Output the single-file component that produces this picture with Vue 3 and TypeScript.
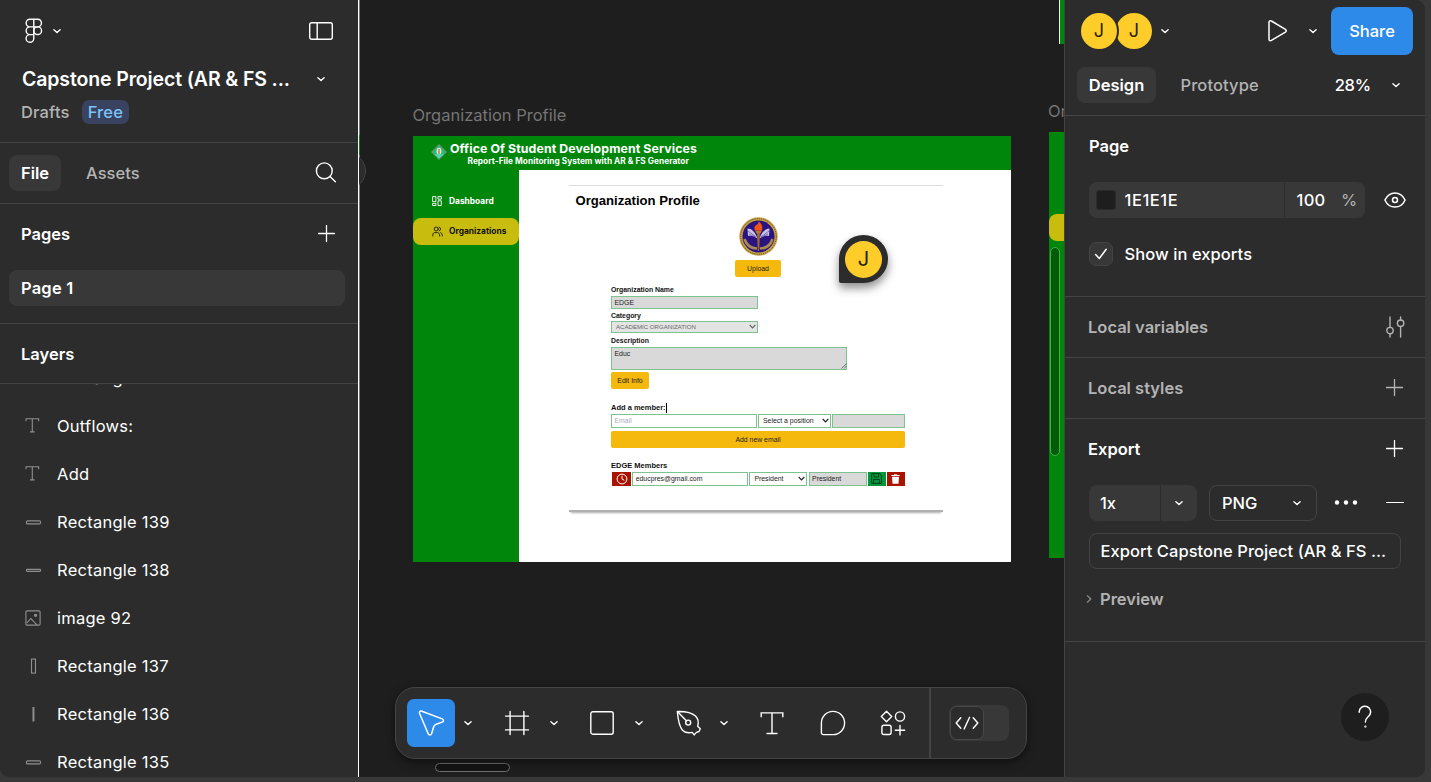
<script setup lang="ts">
import { h } from 'vue'

type LayerKind = 'text' | 'bar' | 'thinbar' | 'image' | 'tall' | 'line'
interface Layer { name: string; kind: LayerKind }

const layers: Layer[] = [
  { name: 'Rectangle 140', kind: 'bar' },
  { name: 'Outflows:', kind: 'text' },
  { name: 'Add', kind: 'text' },
  { name: 'Rectangle 139', kind: 'bar' },
  { name: 'Rectangle 138', kind: 'thinbar' },
  { name: 'image 92', kind: 'image' },
  { name: 'Rectangle 137', kind: 'tall' },
  { name: 'Rectangle 136', kind: 'line' },
  { name: 'Rectangle 135', kind: 'bar' },
]

const Chevron = () =>
  h('svg', { width: 10, height: 6, viewBox: '0 0 10 6', fill: 'none', stroke: 'currentColor', 'stroke-width': 1.4, 'stroke-linecap': 'round', 'stroke-linejoin': 'round' }, [
    h('path', { d: 'M1.9 1.7 5 4.6 8.1 1.7' }),
  ])
const Plus = () =>
  h('svg', { width: 18, height: 18, viewBox: '0 0 18 18', fill: 'none', stroke: 'currentColor', 'stroke-width': 1.3, 'stroke-linecap': 'round' }, [
    h('path', { d: 'M8.5.5v16M.5 8.5h16' }),
  ])
const SelectArrow = () =>
  h('svg', { width: 7, height: 5, viewBox: '0 0 7 5', fill: 'none', stroke: 'currentColor', 'stroke-width': 1.2 }, [
    h('path', { d: 'M.7 1 3.5 3.8 6.3 1' }),
  ])
</script>

<template>
  <div class="app">
    <aside class="left">
      <header class="file-head">
        <div class="bar">
          <div class="logo">
            <svg width="18" height="26" viewBox="0 0 18 26" fill="none" stroke="#fff" stroke-width="1.4">
              <path d="M8.8 1.2H5a3.85 3.85 0 0 0 0 7.7h3.8zM8.8 1.2h3.8a3.85 3.85 0 0 1 0 7.7H8.8zM8.8 8.9H5a3.85 3.85 0 0 0 0 7.7h3.8zM8.8 16.6H5a3.85 3.85 0 1 0 3.8 3.9z" />
              <circle cx="12.7" cy="12.7" r="3.85" />
            </svg>
            <Chevron />
          </div>
          <svg width="24" height="18" viewBox="0 0 24 18" fill="none" stroke="#fff" stroke-width="1.4">
            <rect x=".7" y=".7" width="22.6" height="16.6" rx="2" /><path d="M8.2 1v16" />
          </svg>
        </div>
        <div class="title-row"><span class="title">Capstone Project (AR &amp; FS ...</span><Chevron /></div>
        <div class="drafts"><span>Drafts</span><span class="badge">Free</span></div>
      </header>
      <nav class="tabs">
        <span class="tab on">File</span><span class="tab">Assets</span>
        <svg class="search" width="22" height="22" viewBox="0 0 22 22" fill="none" stroke="#fff" stroke-width="1.4" stroke-linecap="round">
          <circle cx="9.3" cy="8.8" r="7.9" /><path d="m15 14.500 5.400 5.200" />
        </svg>
      </nav>
      <section class="pages">
        <div class="pages-head"><b>Pages</b><Plus /></div>
        <div class="page-row">Page 1</div>
      </section>
      <div class="layers-head">Layers</div>
      <ul class="layers">
        <li v-for="l in layers" :key="l.name">
          <svg width="18" height="18" viewBox="0 0 18 18" fill="none" stroke="#8f8f8f" stroke-width="1.1">
            <path v-if="l.kind === 'text'" d="M2 4.3V1.700h12.600v2.600M8.300 1.700v13.200M6 14.900h4.600" />
            <rect v-else-if="l.kind === 'bar'" x="2.400" y="7.900" width="14.200" height="3" rx="1.2" />
            <rect v-else-if="l.kind === 'thinbar'" x="2.400" y="8.400" width="14.200" height="2" rx=".8" />
            <template v-else-if="l.kind === 'image'">
              <rect x="1.9" y="1.9" width="14.2" height="14.2" rx="1.2" />
              <path d="m2.9 13.9 4-4.4 6 6.4" /><circle cx="11.600" cy="6.300" r="1.1" fill="#8f8f8f" />
            </template>
            <rect v-else-if="l.kind === 'tall'" x="7.500" y="2.100" width="4" height="14" />
            <rect v-else x="8.700" y="2.200" width="1.500" height="14" fill="#8f8f8f" stroke-width=".3" />
          </svg>
          <span>{{ l.name }}</span>
        </li>
      </ul>
    </aside>

    <main class="canvas">
      <div class="edge"></div>
      <div class="edge-green"></div>
      <div class="peek"></div>

      <span class="label l1">Organization Profile</span>
      <div class="frame">
        <div class="f-head">
          <svg class="crest" width="16" height="16" viewBox="0 0 16 16">
            <path d="M8 0 16 8 8 16 0 8z" fill="#6c8f78" /><path d="M8 1.8 14 8 8 14.2 2 8z" fill="#17c878" />
            <path d="M3 9.8 8 14.5l5-4.700-5 1.500z" fill="#48e2b8" /><ellipse cx="8" cy="7.2" rx="2.4" ry="3.4" fill="#e9e3cf" />
            <path d="M7.2 5h1.600v5H7.200z" fill="#b5894c" />
          </svg>
          <div class="f-titles">
            <div class="f-t1">Office Of Student Development Services</div>
            <div class="f-t2">Report-File Monitoring System with AR &amp; FS Generator</div>
          </div>
        </div>
        <div class="f-body">
          <div class="f-side">
            <div class="nav-item">
              <svg width="10" height="10" viewBox="0 0 10 10" fill="none" stroke="#fff" stroke-width=".9">
                <path d="M.6.6h3.300v5H.6zM6 .6h3.300v2.600H6zM.6 7.300h3.300v2.200H.6zM6 4.800h3.300v4.700H6z" />
              </svg>
              <span>Dashboard</span>
            </div>
            <div class="nav-item on">
              <svg width="11" height="11" viewBox="0 0 11 11" fill="none" stroke="#1d1b00" stroke-width=".9" stroke-linecap="round">
                <circle cx="4.2" cy="3" r="2" /><path d="M.8 10V8.800C.8 7.400 1.800 6.600 3 6.600h2.400c1.300 0 2.200.9 2.200 2.200V10M7.200 1.100a2 2 0 0 1 0 3.800M8.600 6.700c1 .3 1.600 1 1.600 2.100V10" />
              </svg>
              <span>Organizations</span>
            </div>
          </div>
          <div class="card">
            <h1>Organization Profile</h1>
            <svg class="seal" width="39" height="39" viewBox="0 0 39 39">
              <circle cx="19.5" cy="19.5" r="19.2" fill="#c6a244" />
              <circle cx="19.5" cy="19.5" r="17.8" fill="none" stroke="#66502b" stroke-width="1" stroke-dasharray="1.2 1" />
              <circle cx="19.5" cy="19.5" r="16" fill="#2b1480" />
              <path d="M8.500 11.500c4 0 7.500 3 10 10-3.500-2.500-6.500-3-9.500-2.500zM30.500 11.500c-4 0-7.500 3-10 10 3.500-2.500 6.500-3 9.500-2.500z" fill="#c9c4e6" />
              <path d="m9 14 8 6M10 17l7 3.500M30 14l-8 6M29 17l-7 3.500" stroke="#5a4a9c" stroke-width=".7" />
              <path d="M5.500 22c2 6.500 6.500 9.300 12.500 9.500M33.500 22c-2 6.500-6.500 9.300-12.500 9.500" fill="none" stroke="#a98b52" stroke-width="2.600" />
              <path d="M18 14h3l-.8 20h-1.400z" fill="#9c6a2b" /><path d="M16 13.500h7l-1.500 3h-4z" fill="#b8782a" />
              <path d="M19.500 4.500c3 2 4.500 4.500 3.600 9h-7.200c-1.200-3.400.3-5 1.500-5.500 1.400-.8 2.100-1.500 2.100-3.500z" fill="#ee5414" />
            </svg>
            <div class="btn upload">Upload</div>
            <div class="form">
              <label>Organization Name</label>
              <div class="in name gray">EDGE</div>
              <label>Category</label>
              <div class="in cat">ACADEMIC ORGANIZATION<SelectArrow /></div>
              <label>Description</label>
              <div class="in desc gray">Educ
                <svg width="6" height="6" viewBox="0 0 6 6" stroke="#444" stroke-width=".7"><path d="M.5 5.500 5.500.5M3 5.500 5.500 3" /></svg>
              </div>
              <div class="btn edit">Edit Info</div>
              <label class="member">Add a member:<i></i></label>
              <div class="row add">
                <div class="in ph">Email</div>
                <div class="in">Select a position<SelectArrow /></div>
                <div class="in gray"></div>
              </div>
              <div class="btn wide">Add new email</div>
              <label class="members">EDGE Members</label>
              <div class="row list">
                <div class="ib red">
                  <svg width="12" height="12" viewBox="0 0 12 12" fill="none" stroke="#fff" stroke-width="1"><circle cx="6" cy="6" r="4.900" /><path d="M6 2.800V6l2.300 1.300" /></svg>
                </div>
                <div class="in">educpres@gmail.com</div>
                <div class="in">President<SelectArrow /></div>
                <div class="in gray">President</div>
                <div class="ib green">
                  <svg width="11" height="11" viewBox="0 0 11 11" fill="none" stroke="#043f1b" stroke-width="1"><path d="M.6.6h8L10.400 2.400v8H.6zM3 .8v3.200h4.600V.8M2.600 10.200V6.400h5.800v3.800" /></svg>
                </div>
                <div class="ib red">
                  <svg width="9" height="10" viewBox="0 0 9 10" fill="#fff"><path d="M.4.900h2.400l.5-.7h2.400l.5.7h2.400v1.200H.4zM1 2.700h7L7.500 9.800h-6z" /></svg>
                </div>
              </div>
            </div>
          </div>
        </div>
      </div>

      <div class="cursor"><span>J</span></div>

      <div class="top-frame"></div>
      <span class="label l2">Organization</span>
      <div class="frame2"><div class="pill"></div></div>
      <div class="vscroll"></div>
      <div class="hscroll"></div>

      <div class="toolbar">
        <div class="tools">
          <div class="tool active">
            <svg width="28" height="28" viewBox="0 0 28 28" fill="none" stroke="#fff" stroke-width="1.500" stroke-linejoin="round">
              <path d="M2.600 4.500C2 2.700 3.100 1.700 4.900 2.300L25.200 9.900c1.700.7 1.700 2.600 0 3.200l-6 2.200c-1.300.5-2 1.100-2.500 2.400l-2.100 7.100c-.7 1.700-2.700 1.700-3.400 0z" />
            </svg>
          </div>
          <div class="drop"><Chevron /></div>
          <div class="tool">
            <svg width="26" height="26" viewBox="0 0 26 26" fill="none" stroke="#fff" stroke-width="1.400" stroke-linecap="round"><path d="M6.100 1.500v23M19.900 1.500v23M1.500 6.100h23M1.500 19.900h23" /></svg>
          </div>
          <div class="drop frame-drop"><Chevron /></div>
          <div class="tool">
            <svg width="24" height="24" viewBox="0 0 24 24" fill="none" stroke="#fff" stroke-width="1.400"><rect x=".8" y=".8" width="22.400" height="22.400" rx="2" /></svg>
          </div>
          <div class="drop shape-drop"><Chevron /></div>
          <div class="tool">
            <svg width="28" height="28" viewBox="0 0 28 28" fill="none" stroke="#fff" stroke-width="1.400" stroke-linejoin="round" stroke-linecap="round">
              <path d="M2.300 2.500c7-.2 14.200.8 18.200 4.600 2.500 2.500 3.300 6.500 2.200 10.200l2.600 2.500-1.300 2.700-2.600.9-2.200 2.500-2-2.500c-4 .8-7.500.2-9.700-2.200C4 17.300 3 10 2.300 2.500zM2.600 2.800l9 9.200" />
              <circle cx="13.200" cy="13.600" r="2.500" />
            </svg>
          </div>
          <div class="drop pen-drop"><Chevron /></div>
          <div class="tool text-tool">
            <svg width="24" height="24" viewBox="0 0 24 24" fill="none" stroke="#fff" stroke-width="1.400" stroke-linecap="round"><path d="M1.200 5.800V1.900h21.600v3.900M12 1.900v20.600M7 22.500h10" /></svg>
          </div>
          <div class="tool">
            <svg width="26" height="26" viewBox="0 0 26 26" fill="none" stroke="#fff" stroke-width="1.400"><path d="M13 1.400A11.600 11.600 0 0 1 13 24.600H3.200a1.800 1.800 0 0 1-1.800-1.800V13A11.600 11.600 0 0 1 13 1.400z" /></svg>
          </div>
          <div class="tool">
            <svg width="26" height="26" viewBox="0 0 26 26" fill="none" stroke="#fff" stroke-width="1.400" stroke-linejoin="round" stroke-linecap="round">
              <path d="m6.500 1.200 5.200 5.300-5.200 5.300-5.200-5.300z" /><circle cx="20" cy="6.500" r="4.600" />
              <rect x="1.900" y="15.300" width="9.200" height="9.200" rx="2" /><path d="M20 15.500v9.400M15.300 20.200h9.400" />
            </svg>
          </div>
        </div>
        <div class="dev">
          <div class="switch">
            <div class="thumb">
              <svg width="24" height="14" viewBox="0 0 24 14" fill="none" stroke="#fff" stroke-width="1.400" stroke-linecap="round" stroke-linejoin="round"><path d="M5.800 1.700 1.200 7l4.600 5.300M18.200 1.700 22.800 7l-4.600 5.300M14.600 1.300 9.200 12.900" /></svg>
            </div>
          </div>
        </div>
      </div>
    </main>

    <aside class="right">
      <div class="r-head">
        <div class="avatars"><span class="av">J</span><span class="av second">J</span></div>
        <Chevron class="c1" />
        <svg class="play" width="21" height="24" viewBox="0 0 21 24" fill="none" stroke="#fff" stroke-width="1.500" stroke-linejoin="round"><path d="M2 3.200C2 1.800 3.300 1.300 4.400 2l14 8.300c1.200.8 1.200 2 0 2.800l-14 8.300C3.300 22 2 21.500 2 20.200z" /></svg>
        <Chevron class="c2" />
        <div class="share">Share</div>
      </div>
      <div class="r-tabs">
        <span class="tab on">Design</span><span class="tab proto">Prototype</span>
        <span class="zoom">28%</span><Chevron />
      </div>
      <section class="page-sec">
        <h2>Page</h2>
        <div class="color-row">
          <div class="field"><i class="sw"></i><span class="hex">1E1E1E</span><span class="op">100</span><span class="pct">%</span></div>
          <svg width="22" height="16" viewBox="0 0 22 16" fill="none" stroke="#fff" stroke-width="1.500"><path d="M.9 8C3 3.400 6.600.9 11 .9S19 3.400 21.100 8C19 12.600 15.400 15.100 11 15.100S3 12.600.9 8z" stroke-linejoin="round" /><circle cx="11" cy="8" r="2.500" /></svg>
        </div>
        <div class="check-row">
          <span class="check"><svg width="14" height="12" viewBox="0 0 14 12" fill="none" stroke="#fff" stroke-width="1.500" stroke-linecap="round" stroke-linejoin="round"><path d="M1.600 6.600 5.300 10.500 12.200 1.300" /></svg></span>
          <span>Show in exports</span>
        </div>
      </section>
      <section class="line-sec dim">
        <span>Local variables</span>
        <svg width="20" height="22" viewBox="0 0 20 22" fill="none" stroke="currentColor" stroke-width="1.400" stroke-linecap="round"><path d="M4 1v10.500M4 18v3M14.600 1v3M14.600 10.500V21" /><circle cx="4" cy="14.600" r="3.200" /><circle cx="14.600" cy="7.200" r="3.200" /></svg>
      </section>
      <section class="line-sec dim plus"><span>Local styles</span><Plus /></section>
      <section class="export">
        <div class="ex-head"><span>Export</span><Plus /></div>
        <div class="ex-row">
          <div class="scale"><span>1x</span><em><Chevron /></em></div>
          <div class="fmt"><span>PNG</span><Chevron /></div>
          <svg class="dots" width="24" height="6" viewBox="0 0 24 6" fill="#fff"><circle cx="3" cy="2.500" r="2.200" /><circle cx="12" cy="2.500" r="2.200" /><circle cx="21" cy="2.500" r="2.200" /></svg>
          <i class="minus"></i>
        </div>
        <div class="ex-btn">Export Capstone Project (AR &amp; FS ...</div>
        <div class="preview">
          <svg width="6" height="10" viewBox="0 0 6 10" fill="none" stroke="#8c8c8c" stroke-width="1.300" stroke-linejoin="round"><path d="M1 1.400 4.800 5 1 8.600" /></svg>
          <span>Preview</span>
        </div>
      </section>
      <div class="help">
        <svg width="16" height="24" viewBox="0 0 16 24" fill="none" stroke="#fff" stroke-width="1.500" stroke-linecap="round"><path d="M2.200 7.200A5.700 5.700 0 1 1 12.300 10.600C10.300 12.800 8.400 13.300 8.400 17" /><circle cx="8.400" cy="21.600" r=".4" /></svg>
      </div>
    </aside>
  </div>
</template>

<style>
body { background: #383838; overflow: hidden; }
</style>

<style scoped>
* { box-sizing: border-box; }
.app { display: flex; width: 1431px; height: 782px; padding: 0 6px 5px 0; background: #383838; font: 500 16.5px/24px Inter, sans-serif; color: #fff; overflow: hidden; }
svg { display: block; flex: none; }

.left { width: 358px; height: 777px; background: #2c2c2c; border-bottom-left-radius: 9px; overflow: hidden; display: flex; flex-direction: column; }
.file-head { height: 143px; border-bottom: 1px solid #444; padding: 18px 0 0 21px; }
.bar { display: flex; justify-content: space-between; align-items: center; height: 26px; padding: 0 25px 0 4px; }
.logo { display: flex; align-items: center; gap: 9px; }
.title-row { display: flex; align-items: center; justify-content: space-between; margin-top: 23px; padding: 0 32px 0 1px; }
.title { font-size: 19.5px; font-weight: 600; letter-spacing: -.13px; }
.drafts { display: flex; align-items: center; gap: 12px; margin-top: 9px; color: #b3b3b3; font-weight: 450; letter-spacing: .17px; }
.badge { height: 24px; padding: 0 6px; border-radius: 7px; background: #394360; color: #7cc4f8; }
.tabs { height: 61px; border-bottom: 1px solid #444; display: flex; align-items: center; padding-left: 9px; }
.tab { height: 36px; line-height: 36px; padding: 0 12px; border-radius: 8px; color: #b3b3b3; }
.tab.on { background: #383838; color: #fff; font-weight: 600; margin-right: 13px; }
.search { margin-left: auto; margin-right: 21px; }
.pages { height: 120px; border-bottom: 1px solid #444; padding: 18px 13px 0 9px; }
.pages-head { display: flex; justify-content: space-between; align-items: center; padding: 0 9px 0 12px; }
.pages-head b, .layers-head, .page-row { font-weight: 600; }
.page-row { margin-top: 24px; height: 36px; line-height: 36px; padding-left: 12px; border-radius: 8px; background: #383838; letter-spacing: .2px; }
.layers-head { flex: none; height: 60px; line-height: 60px; padding-left: 21px; border-bottom: 1px solid #444; }
.layers { list-style: none; margin: 0; padding: 0; flex: 1; overflow: hidden; font-weight: 430; letter-spacing: .25px; }
.layers li { height: 48px; display: flex; align-items: center; gap: 15px; padding-left: 24px; }
.layers li:first-child { margin-top: -30px; }

.canvas { position: relative; width: 706px; height: 777px; background: #1e1e1e; overflow: hidden; }
.edge { position: absolute; left: 0; top: 0; width: 1px; height: 777px; background: #fff; box-shadow: 1px -217px 0 #777; }
.edge-green { position: absolute; left: 1px; top: 135px; width: 1px; height: 20px; background: #00870b; }
.peek { position: absolute; left: -28px; top: 153px; width: 36px; height: 36px; border-radius: 50%; border: 1px solid #444; background: #2c2c2c; clip-path: inset(0 0 0 29px); }
.label { position: absolute; color: #757575; font-size: 16.5px; font-weight: 400; line-height: 20px; white-space: nowrap; }
.l1 { left: 54.500px; top: 105px; }
.l2 { left: 690px; top: 101px; }
.frame { position: absolute; left: 55px; top: 136px; width: 598px; height: 426px; background: #fff; }
.f-head { height: 33.500px; background: #00870b; display: flex; padding: 5px 0 0 18px; gap: 3px; }
.crest { margin-top: 3px; }
.f-titles { white-space: nowrap; }
.f-t1 { font-size: 12.300px; line-height: 15px; font-weight: 700; letter-spacing: .11px; }
.f-t2 { font-size: 8.300px; line-height: 11px; font-weight: 700; letter-spacing: .03px; margin: -.5px 0 0 17.500px; }
.f-body { display: flex; height: 392.500px; }
.f-side { width: 106px; height: 392.500px; background: #00870b; padding-top: 18px; }
.nav-item { display: flex; align-items: center; height: 26.500px; font-size: 8.400px; line-height: 12px; font-weight: 700; padding-left: 19px; gap: 7px; border-radius: 8px; }
.nav-item span { width: 60px; }
.nav-item.on { margin-top: 4px; background: #c8bc0e; color: #111; gap: 6px; }
.card { margin: 15px 0 0 50px; width: 374px; height: 327px; border-top: 1px solid #dedede; border-bottom: 2px solid #b0b0b0; box-shadow: 0 3px 2px -2px #aaa; font: 400 6.900px/9px "Liberation Sans", Arial, sans-serif; color: #222; padding-top: 7px; }
.card h1 { margin: 0 0 0 6.500px; font-size: 13.100px; line-height: 16px; font-weight: 700; color: #000; }
.seal { margin: 8px 0 4px 170px; }
.btn { display: flex; align-items: center; justify-content: center; height: 17px; border-radius: 2px; background: #f5b80c; }
.upload { width: 46px; margin-left: 166px; }
.form { width: 294px; margin: 8px 0 0 42px; }
.form label { display: block; font-weight: 700; height: 9px; margin-top: 2px; color: #111; }
.in { display: flex; align-items: center; justify-content: space-between; border: 1px solid #7dc38f; padding: 0 2.500px; background: #fff; white-space: nowrap; }
.in.gray { background: #d9d9d9; }
.name { width: 147px; height: 13px; margin-top: 2px; }
.cat { width: 147px; height: 12.500px; margin-top: 1px; margin-bottom: 2.500px; background: #e4e4e4; font-size: 6.100px; padding-left: 4px; color: #666; }
.desc { width: 236px; height: 23px; margin-top: 2px; align-items: flex-start; padding-top: 1px; padding-right: 0; }
.desc svg { align-self: flex-end; }
.edit { width: 38px; margin-top: 2.500px; }
.form label.member { margin-top: 13.500px; font-size: 7.500px; display: flex; }
.member i { width: 1px; height: 10px; background: #000; }
.row { display: grid; margin-top: 2px; }
.add { grid-template-columns: 146px 73px 73px; gap: 1px; height: 14px; }
.ph { color: #a6adb8; }
.in.in svg { margin-right: -1px; }
.row .in:has(svg) { padding-left: 4px; }
.wide { margin-top: 3px; }
.form label.members { margin-top: 13px; font-size: 7.500px; }
.list { grid-template-columns: 19px 116px 58px 58px 18px 18px; gap: 1.200px; height: 14.500px; margin-left: 1px; }
.ib { display: flex; align-items: center; justify-content: center; }
.red { background: #a91400; }
.green { background: #04983c; }

.cursor { position: absolute; left: 481px; top: 235px; width: 49px; height: 48px; border-radius: 50% 50% 50% 2px; background: #2c2c2c; display: flex; align-items: center; justify-content: center; box-shadow: 0 5px 10px rgba(0, 0, 0, .45); }
.cursor span { width: 37px; height: 37px; line-height: 37px; border-radius: 50%; background: #ffcd29; color: #2b2200; text-align: center; font-size: 20px; font-weight: 400; }
.top-frame { position: absolute; left: 701px; top: 0; width: 6px; height: 44px; background: #00870b; border-left: 1px solid #eee; }
.frame2 { position: absolute; left: 691px; top: 132px; width: 20px; height: 426px; background: #00870b; padding-top: 82px; }
.pill { width: 40px; height: 27px; border-radius: 8px; background: #c8bc0e; }
.vscroll { position: absolute; left: 692px; top: 247px; width: 10px; height: 209px; border-radius: 5px; border: 1px solid #45ad50; background: #005c08; }
.hscroll { position: absolute; left: 77px; top: 763px; width: 75px; height: 9px; border-radius: 5px; border: 1px solid #707070; background: #141414; }

.toolbar { position: absolute; left: 37px; top: 687px; width: 632px; height: 72px; border: 1px solid #444; border-radius: 20px; background: #2c2c2c; display: flex; box-shadow: 0 3px 8px rgba(0, 0, 0, .5); }
.tools { width: 535px; padding-left: 11px; display: flex; align-items: center; border-right: 2px solid #444; }
.tool { width: 48px; height: 48px; border-radius: 7px; display: flex; align-items: center; justify-content: center; margin-right: 12px; flex: none; }
.tool:has(+ .drop) { margin-right: 0; }
.tool.active { background: #2d8ae9; }
.drop { width: 26px; margin-right: 12px; display: flex; justify-content: center; flex: none; }
.frame-drop { width: 25px; }
.shape-drop { margin-right: 13px; }
.pen-drop { width: 22px; margin-right: 13px; }
.text-tool { margin-right: 13px; }
.dev { flex: 1; display: flex; align-items: center; padding-left: 18px; }
.switch { width: 60px; height: 36px; border-radius: 8px; background: #383838; padding: 1px; }
.thumb { width: 34px; height: 34px; border-radius: 7px; border: 1px solid #484848; background: #2c2c2c; display: flex; align-items: center; justify-content: center; }

.right { position: relative; width: 361px; height: 777px; background: #2c2c2c; border-left: 1px solid #444; border-radius: 0 9px 9px 0; }
.r-head { height: 62px; display: flex; align-items: center; padding-left: 16px; }
.avatars { display: flex; width: 71px; }
.av { width: 36px; height: 36px; line-height: 36px; border-radius: 50%; background: #ffcd29; color: #2b2200; text-align: center; font-size: 18px; font-weight: 400; flex: none; position: relative; z-index: 1; box-shadow: 0 0 0 2px #2c2c2c; }
.av.second { z-index: 0; margin-left: -1px; }
.c1 { margin-left: 8px; }
.play { margin-left: 97px; }
.c2 { margin-left: 20px; }
.share { margin-left: 13px; width: 82px; height: 48px; line-height: 48px; text-align: center; border-radius: 8px; background: #2d8ae9; }
.r-tabs { height: 54px; border-bottom: 1px solid #444; display: flex; align-items: flex-start; padding: 5px 24px 0 12px; }
.r-tabs .tab.on { width: 79px; padding: 0; text-align: center; margin-right: 12.500px; }
.r-tabs .proto { letter-spacing: .1px; }
.zoom { margin-left: auto; line-height: 36px; letter-spacing: -.2px; }
.r-tabs > svg { margin: 15px 0 0 20px; }
.page-sec { height: 181px; border-bottom: 1px solid #444; padding: 18px 19px 0 24px; }
.page-sec h2 { margin: 0; font-size: 16.500px; line-height: 24px; font-weight: 600; }
.color-row { display: flex; align-items: center; justify-content: space-between; margin-top: 24px; }
.field { width: 276px; height: 36px; line-height: 36px; border-radius: 8px; background: #383838; display: flex; align-items: center; padding-left: 7px; }
.sw { width: 20px; height: 20px; border-radius: 3px; background: #1e1e1e; border: 1px solid #2b2b2b; }
.hex { margin-left: 8.500px; width: 159.500px; letter-spacing: .55px; }
.op { width: 57px; border-left: 1px solid #2c2c2c; padding-left: 11.500px; letter-spacing: .3px; }
.pct { color: #b3b3b3; font-weight: 400; }
.check-row { display: flex; align-items: center; gap: 11.500px; margin-top: 24px; letter-spacing: .07px; }
.check { width: 24px; height: 24px; border-radius: 7px; background: #383838; border: 1px solid #444; display: flex; align-items: center; justify-content: center; }
.line-sec { height: 61px; border-bottom: 1px solid #444; display: flex; align-items: center; justify-content: space-between; padding: 0 19px 0 23px; }
.line-sec.plus { padding-right: 21px; }
.dim { color: #b3b3b3; font-weight: 600; }
.export { height: 223px; border-bottom: 1px solid #444; padding: 18px 21px 0 24px; }
.ex-head { display: flex; justify-content: space-between; align-items: center; font-weight: 600; margin-left: -1px; }
.ex-row { display: flex; align-items: center; margin-top: 24px; }
.scale { width: 108px; height: 36px; line-height: 36px; border-radius: 8px; background: #383838; display: flex; padding-left: 11px; }
.scale span { width: 60px; }
.scale em { flex: 1; border-left: 1px solid #2c2c2c; display: flex; align-items: center; justify-content: center; }
.fmt { width: 108px; height: 36px; margin-left: 12px; padding: 0 14px 0 12px; border: 1px solid #444; border-radius: 8px; display: flex; align-items: center; justify-content: space-between; }
.dots { margin-left: 17px; }
.minus { width: 18px; height: 1.500px; background: #fff; margin: -1px 0 0 28px; }
.ex-btn { width: 312px; height: 36px; line-height: 34px; margin-top: 12px; padding-left: 10.500px; border: 1px solid #444; border-radius: 8px; white-space: nowrap; letter-spacing: .05px; }
.preview { display: flex; align-items: center; gap: 8px; margin: 18px 0 0 -3px; color: #b3b3b3; font-weight: 600; }
.help { position: absolute; left: 276px; top: 693px; width: 48px; height: 48px; border-radius: 50%; background: #1e1e1e; display: flex; align-items: center; justify-content: center; }
</style>
